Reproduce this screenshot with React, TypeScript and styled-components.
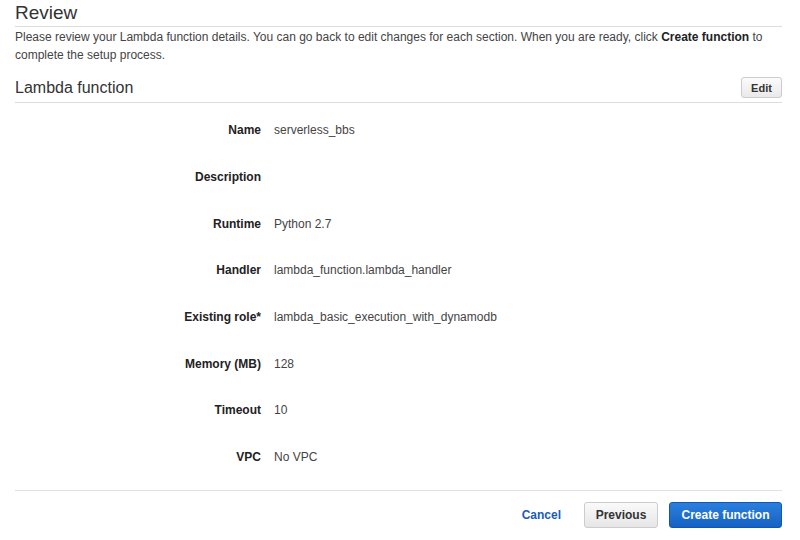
import React from 'react';
import styled, {createGlobalStyle} from 'styled-components';

const GlobalStyle = createGlobalStyle`
    body {
        margin: 0;
        background: #ffffff;
        font-family: 'Liberation Sans', Arial, Helvetica, sans-serif;
        color: #333333;
    }
`;

type Field = {label: string; value: string};

const fields: Field[] = [
    {label: 'Name', value: 'serverless_bbs'},
    {label: 'Description', value: ''},
    {label: 'Runtime', value: 'Python 2.7'},
    {label: 'Handler', value: 'lambda_function.lambda_handler'},
    {label: 'Existing role*', value: 'lambda_basic_execution_with_dynamodb'},
    {label: 'Memory (MB)', value: '128'},
    {label: 'Timeout', value: '10'},
    {label: 'VPC', value: 'No VPC'},
];

const App = () => {
    return (
        <Page>
            <GlobalStyle />
            <Title>Review</Title>
            <Intro>
                Please review your Lambda function details. You can go back to
                edit changes for each section. When you are ready, click{' '}
                <b>Create function</b> to complete the setup process.
            </Intro>
            <SectionHeader>
                <SectionTitle>Lambda function</SectionTitle>
                <EditButton>Edit</EditButton>
            </SectionHeader>
            <Details>
                {fields.map(f => (
                    <Row key={f.label}>
                        <Label>{f.label}</Label>
                        <Value>{f.value}</Value>
                    </Row>
                ))}
            </Details>
            <Footer>
                <CancelLink>Cancel</CancelLink>
                <SecondaryButton>Previous</SecondaryButton>
                <PrimaryButton>Create function</PrimaryButton>
            </Footer>
        </Page>
    );
};

export default App;

const Page = styled.div`
    width: 800px;
    box-sizing: border-box;
    padding: 0 18px 0 15px;
`;

const Title = styled.h1`
    margin: 0;
    height: 27px;
    box-sizing: border-box;
    padding-top: 1px;
    font-size: 19px;
    line-height: 24px;
    font-weight: normal;
    color: #333333;
    border-bottom: 1px solid #dddddd;
`;

const Intro = styled.p`
    margin: 1px 0 0;
    font-size: 12px;
    line-height: 18px;
    color: #444444;
    b {
        color: #222222;
    }
`;

const SectionHeader = styled.div`
    margin-top: 11px;
    height: 25px;
    display: flex;
    align-items: center;
    justify-content: space-between;
    border-bottom: 1px solid #dddddd;
    padding-bottom: 2px;
`;

const SectionTitle = styled.h2`
    margin: 0;
    font-size: 16px;
    font-weight: normal;
    color: #333333;
`;

const EditButton = styled.button`
    height: 21px;
    width: 41px;
    padding: 0;
    font-family: inherit;
    font-size: 11px;
    font-weight: bold;
    color: #333333;
    background: linear-gradient(#fbfbfb, #e9e9e9);
    border: 1px solid #cccccc;
    border-radius: 3px;
`;

const Details = styled.div`
    padding-top: 4px;
    border-bottom: 1px solid #e2e2e2;
    padding-bottom: 9px;
`;

const Row = styled.div`
    height: 46.7px;
    display: grid;
    grid-template-columns: 246px 1fr;
    column-gap: 13px;
    align-items: center;
    font-size: 12px;
`;

const Label = styled.div`
    text-align: right;
    font-weight: bold;
    color: #222222;
`;

const Value = styled.div`
    color: #444444;
`;

const Footer = styled.div`
    display: flex;
    justify-content: flex-end;
    align-items: center;
    padding-top: 11px;
`;

const CancelLink = styled.a`
    font-size: 12px;
    font-weight: bold;
    color: #1a5cb8;
    margin-right: 23px;
    cursor: pointer;
`;

const SecondaryButton = styled.button`
    height: 26px;
    width: 74px;
    padding: 0;
    font-family: inherit;
    font-size: 12px;
    font-weight: bold;
    color: #333333;
    background: linear-gradient(#fafafa, #e6e6e6);
    border: 1px solid #cccccc;
    border-radius: 3px;
    margin-right: 11px;
`;

const PrimaryButton = styled.button`
    height: 26px;
    width: 113px;
    padding: 0;
    font-family: inherit;
    font-size: 12px;
    font-weight: bold;
    color: #ffffff;
    background: linear-gradient(#2b7fdc, #1562c4);
    border: 1px solid #1257ad;
    border-radius: 3px;
`;
